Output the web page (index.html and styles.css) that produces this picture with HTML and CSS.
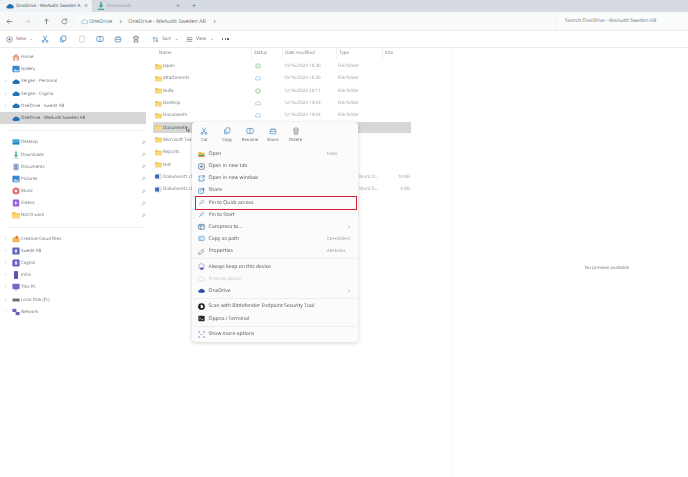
FILE: index.html
```html
<!DOCTYPE html>
<html lang="en">
<head>
<meta charset="utf-8">
<title>OneDrive - WeAudit Sweden AB</title>
<link rel="stylesheet" href="styles.css">
</head>
<body>
<svg class="defs" aria-hidden="true">
  <symbol id="cloud" viewBox="0 0 16 12"><path fill="currentColor" d="M4 11a3 3 0 0 1-.4-6A4.600 4.600 0 0 1 12 4.200 3.400 3.400 0 0 1 12.400 11z"/></symbol>
  <symbol id="cloud-o" viewBox="0 0 16 12"><path fill="none" stroke="currentColor" stroke-width="1.400" d="M4 11a3 3 0 0 1-.4-6A4.600 4.600 0 0 1 12 4.200 3.400 3.400 0 0 1 12.400 11z"/></symbol>
  <symbol id="folder" viewBox="0 0 16 13"><path fill="#f7c34f" d="M0 2a1.500 1.500 0 0 1 1.500-1.500h4L7.500 2.500H14.500A1.500 1.500 0 0 1 16 4v7.500a1.500 1.500 0 0 1-1.500 1.500h-13A1.500 1.500 0 0 1 0 11.500z"/><path fill="#fbd775" d="M0 5h16v6.500a1.500 1.500 0 0 1-1.500 1.500h-13A1.500 1.500 0 0 1 0 11.500z"/></symbol>
  <symbol id="doc" viewBox="0 0 14 14"><rect x="3" y="1" width="10" height="12" rx="1" fill="#d6e2f2"/><rect x="0" y="3" width="8" height="8" rx="1" fill="#3d6fb5"/></symbol>
  <symbol id="pin" viewBox="0 0 16 16"><path fill="none" stroke="currentColor" stroke-width="1.300" stroke-linejoin="round" d="M9.500 2 14 6.500l-3.500 1.500L8 11 5 8l3-2.500zM6.500 9.500 2 14"/></symbol>
  <symbol id="chev" viewBox="0 0 8 8"><path fill="none" stroke="currentColor" stroke-width="1" d="M3 1.500 5.500 4 3 6.500"/></symbol>
  <symbol id="status-ok" viewBox="0 0 12 12"><circle cx="6" cy="6" r="4.500" fill="none" stroke="#7cc08a" stroke-width="1.500"/><path d="M4 6l1.500 1.500L8 5" fill="none" stroke="#7cc08a"/></symbol>
</svg>

<div class="window">
  <header class="tabs">
    <div class="tab tab-active">
      <svg class="i8 c-cloud"><use href="#cloud"/></svg>
      <span class="tab-title">OneDrive - WeAudit Sweden A</span>
      <span class="tab-x">×</span>
    </div>
    <div class="tab tab-second">
      <svg class="i8" viewBox="0 0 10 10"><path fill="#3fa98a" d="M4 0h2v4h2L5 7.500 2 4h2zM1 8.500h8V10H1z"/></svg>
      <span class="tab-title tab-dim">Downloads</span>
      <span class="tab-x">×</span>
    </div>
    <span class="tab-plus">+</span>
  </header>

  <div class="address">
    <div class="nav-btns">
      <svg class="i7 c-dark" viewBox="0 0 10 10"><path fill="none" stroke="currentColor" d="M9 5H1.500M4.500 2 1.500 5l3 3"/></svg>
      <svg class="i7 c-faint" viewBox="0 0 10 10"><path fill="none" stroke="currentColor" d="M1 5h7.500M5.500 2l3 3-3 3"/></svg>
      <svg class="i7 c-dark" viewBox="0 0 10 10"><path fill="none" stroke="currentColor" d="M5 9V1.500M2 4.500l3-3 3 3"/></svg>
      <svg class="i7 c-dark" viewBox="0 0 10 10"><path fill="none" stroke="currentColor" d="M8.500 5a3.500 3.500 0 1 1-1-2.500M8 .8v2.200H5.800"/></svg>
    </div>
    <div class="crumbs">
      <svg class="i7 c-cloud-light"><use href="#cloud-o"/></svg>
      <span class="crumb crumb-a">OneDrive</span>
      <svg class="i5 c-dark"><use href="#chev"/></svg>
      <span class="crumb crumb-b">OneDrive - WeAudit Sweden AB</span>
      <svg class="i5 c-dark"><use href="#chev"/></svg>
    </div>
    <div class="search">Search OneDrive - WeAudit Sweden AB</div>
  </div>

  <div class="commands">
    <span class="cmd cmd-new">
      <svg class="i7 c-dark" viewBox="0 0 10 10"><circle cx="5" cy="5" r="4" fill="none" stroke="currentColor" stroke-width=".8"/><path stroke="#2a6fb0" stroke-width=".9" d="M5 3v4M3 5h4"/></svg>
      New <small>⌄</small>
    </span>
    <span class="cmd-icons">
      <svg class="i8" viewBox="0 0 10 10"><path fill="none" stroke="#4a8bc4" d="M2.500 1 7 7.500M7.500 1 3 7.500"/><circle cx="2.500" cy="8" r="1.200" fill="none" stroke="#4a8bc4"/><circle cx="7.500" cy="8" r="1.200" fill="none" stroke="#4a8bc4"/></svg>
      <svg class="i8" viewBox="0 0 10 10"><rect x="3.500" y="1" width="5" height="6" rx="1" fill="none" stroke="#4a8bc4"/><path fill="none" stroke="#4a8bc4" d="M2 3v5.500h4.500"/></svg>
      <svg class="i8" viewBox="0 0 10 10"><rect x="2" y="1.500" width="6" height="7.500" rx=".8" fill="none" stroke="#c9ced4"/></svg>
      <svg class="i8" viewBox="0 0 10 10"><rect x="1" y="2" width="8" height="6" rx="1" fill="none" stroke="#5f8fbd"/><path stroke="#5f8fbd" d="M5 1v8"/></svg>
      <svg class="i8" viewBox="0 0 10 10"><rect x="1.500" y="3" width="7" height="5.500" rx=".8" fill="none" stroke="#5f8fbd"/><path stroke="#5f8fbd" d="M3.500 3V1.500M6.500 3V1.500M1.500 5.500h7"/></svg>
      <svg class="i8" viewBox="0 0 10 10"><path fill="none" stroke="#6f7780" d="M1.500 2.500h7M2.500 2.500l.5 6.500h4l.5-6.500M4 1h2M4 4.500l2 2.500M6 4.500 4 7"/></svg>
    </span>
    <span class="cmd cmd-sort">
      <svg class="i7" viewBox="0 0 10 10"><path fill="none" stroke="#4a8bc4" d="M3 8.500v-7M1 3.500l2-2 2 2"/><path fill="none" stroke="#6f7780" d="M7 1.500v7M5.500 6.500l1.500 2 1.500-2"/></svg>
      Sort <small>⌄</small>
    </span>
    <span class="cmd cmd-view">
      <svg class="i7" viewBox="0 0 10 10"><path stroke="#6f7780" d="M1 2.500h8M1 5h8M1 7.500h8"/></svg>
      View <small>⌄</small>
    </span>
    <span class="cmd-more"><i></i><i></i><i></i></span>
  </div>

  <main class="body">
    <nav class="sidebar">
      <div class="nav-row"><span class="exp"></span><svg class="i8" viewBox="0 0 10 10"><path fill="#e6a58a" d="M5 .8 9.500 4.800 8.700 5.500V9.500H1.300V5.500L.5 4.800z"/><rect x="4" y="6" width="2" height="3.500" fill="#fff"/></svg><span class="soft">Home</span></div>
      <div class="nav-row"><span class="exp"></span><svg class="i8" viewBox="0 0 10 10"><rect x=".5" y="1" width="9" height="8" rx="1" fill="#3f86cf"/><path fill="#bfe0f7" d="M1.500 8 4 5l2 2 1.500-1.500L9 8z"/></svg><span class="soft">Gallery</span></div>
      <div class="nav-row"><span class="exp">›</span><svg class="i7 c-cloud"><use href="#cloud"/></svg><span class="soft">Vergen - Personal</span></div>
      <div class="nav-row"><span class="exp">›</span><svg class="i7 c-cloud"><use href="#cloud"/></svg><span class="soft">Vergen - Cognia</span></div>
      <div class="nav-row"><span class="exp">›</span><svg class="i7 c-cloud"><use href="#cloud"/></svg><span class="soft">OneDrive - Swedit AB</span></div>
      <div class="nav-row nav-sel"><span class="exp">›</span><svg class="i7 c-cloud"><use href="#cloud"/></svg><span class="soft">OneDrive - WeAudit Sweden AB</span></div>

      <div class="nav-sep nav-sep-a"></div>

      <div class="nav-row"><span class="exp"></span><svg class="i8" viewBox="0 0 10 10"><rect x=".5" y="1.500" width="9" height="7" rx="1" fill="#43a7d6"/><rect x="1.500" y="6.500" width="7" height="1" fill="#1d6f9c"/></svg><span class="soft grow">Desktop</span><svg class="i5 c-mid"><use href="#pin"/></svg></div>
      <div class="nav-row"><span class="exp"></span><svg class="i8" viewBox="0 0 10 10"><path fill="#52b89a" d="M4 .5h2v4.500h2L5 8 2 5h2z"/><path fill="#a9c9d8" d="M1.500 8.500h7v1h-7z"/></svg><span class="soft grow">Downloads</span><svg class="i5 c-mid"><use href="#pin"/></svg></div>
      <div class="nav-row"><span class="exp"></span><svg class="i8" viewBox="0 0 10 10"><rect x="1.500" y=".5" width="7" height="9" rx=".8" fill="#b4c3dc"/><path stroke="#4f73ad" d="M3 3h4M3 5h4M3 7h4"/></svg><span class="soft grow">Documents</span><svg class="i5 c-mid"><use href="#pin"/></svg></div>
      <div class="nav-row"><span class="exp"></span><svg class="i8" viewBox="0 0 10 10"><rect x=".5" y="1" width="9" height="8" rx="1" fill="#3f86cf"/><path fill="#bfe0f7" d="M1.500 8 4 5l2 2 1.500-1.500L9 8z"/></svg><span class="soft grow">Pictures</span><svg class="i5 c-mid"><use href="#pin"/></svg></div>
      <div class="nav-row"><span class="exp"></span><svg class="i8" viewBox="0 0 10 10"><circle cx="5" cy="5" r="4.500" fill="#e2737c"/><circle cx="5" cy="5" r="1.500" fill="#fff"/></svg><span class="soft grow">Music</span><svg class="i5 c-mid"><use href="#pin"/></svg></div>
      <div class="nav-row"><span class="exp"></span><svg class="i8" viewBox="0 0 10 10"><rect x="1" y=".5" width="8" height="9" rx="1" fill="#9a62d8"/><path fill="#fff" d="M3.800 3v4L7 5z"/></svg><span class="soft grow">Videos</span><svg class="i5 c-mid"><use href="#pin"/></svg></div>
      <div class="nav-row"><span class="exp"></span><svg class="i8"><use href="#folder"/></svg><span class="soft grow">NaCl3 work</span><svg class="i5 c-mid"><use href="#pin"/></svg></div>

      <div class="nav-sep nav-sep-b"></div>

      <div class="nav-row"><span class="exp">›</span><svg class="i8" viewBox="0 0 10 10"><path fill="#f4b65a" d="M.5 3h4l1 1h4v5h-9z"/><circle cx="6" cy="3" r="2" fill="#ea7b3d"/></svg><span class="soft">Creative Cloud Files</span></div>
      <div class="nav-row"><span class="exp">›</span><svg class="i8" viewBox="0 0 10 10"><rect x=".5" y=".5" width="9" height="9" rx="1.500" fill="#5f5fc4"/><rect x="3.500" y="3" width="3" height="4" fill="#dcdcf6"/></svg><span class="soft">Swedit AB</span></div>
      <div class="nav-row"><span class="exp">›</span><svg class="i8" viewBox="0 0 10 10"><rect x=".5" y=".5" width="9" height="9" rx="1.500" fill="#5f5fc4"/><rect x="3.500" y="3" width="3" height="4" fill="#dcdcf6"/></svg><span class="soft">Cognia</span></div>
      <div class="nav-row"><span class="exp">›</span><svg class="i8" viewBox="0 0 10 10"><rect x="2.500" y="0" width="5" height="10" rx="1.200" fill="#5a55b5"/></svg><span class="soft">Infra</span></div>
      <div class="nav-row"><span class="exp">›</span><svg class="i8" viewBox="0 0 10 10"><rect x=".5" y="1" width="9" height="6.500" rx=".8" fill="#7469c4"/><rect x="3" y="8" width="4" height="1" fill="#7469c4"/></svg><span class="soft">This PC</span></div>
      <div class="nav-row"><span class="exp">›</span><svg class="i8" viewBox="0 0 10 10"><rect x=".5" y="3" width="9" height="4" rx=".8" fill="#6c7278"/></svg><span class="soft">Local Disk (D:)</span></div>
      <div class="nav-row"><span class="exp">›</span><svg class="i8" viewBox="0 0 10 10"><rect x=".5" y="1" width="5" height="4" fill="#6a63bd"/><rect x="4.500" y="5" width="5" height="4" fill="#6a63bd"/></svg><span class="soft">Network</span></div>
    </nav>

    <section class="files">
      <div class="file-head">
        <span class="col-name">Name</span><span class="col">Status</span><span class="col">Date modified</span><span class="col">Type</span><span class="col">Size</span>
      </div>
      <div class="file-row"><span class="name"><svg class="i7"><use href="#folder"/></svg><i class="soft">Japan</i></span><span><svg class="i6"><use href="#status-ok"/></svg></span><span class="soft pale">10/16/2024 10:30</span><span class="soft pale">File folder</span><span></span></div>
      <div class="file-row"><span class="name"><svg class="i7"><use href="#folder"/></svg><i class="soft">attachments</i></span><span><svg class="i6 c-cloud-light"><use href="#cloud-o"/></svg></span><span class="soft pale">10/16/2024 10:30</span><span class="soft pale">File folder</span><span></span></div>
      <div class="file-row"><span class="name"><svg class="i7"><use href="#folder"/></svg><i class="soft">Bulla</i></span><span><svg class="i6"><use href="#status-ok"/></svg></span><span class="soft pale">12/16/2024 20:11</span><span class="soft pale">File folder</span><span></span></div>
      <div class="file-row"><span class="name"><svg class="i7"><use href="#folder"/></svg><i class="soft">Desktop</i></span><span><svg class="i6 c-cloud-light"><use href="#cloud-o"/></svg></span><span class="soft pale">12/16/2024 19:03</span><span class="soft pale">File folder</span><span></span></div>
      <div class="file-row"><span class="name"><svg class="i7"><use href="#folder"/></svg><i class="soft">Documents</i></span><span><svg class="i6 c-cloud-light"><use href="#cloud-o"/></svg></span><span class="soft pale">12/16/2024 19:03</span><span class="soft pale">File folder</span><span></span></div>
      <div class="file-row file-sel"><span class="name"><svg class="i7"><use href="#folder"/></svg><i class="soft dark">Documents</i></span><span></span><span></span><span></span><span></span></div>
      <div class="file-row"><span class="name"><svg class="i7"><use href="#folder"/></svg><i class="soft">Microsoft Tea</i></span><span></span><span></span><span></span><span></span></div>
      <div class="file-row"><span class="name"><svg class="i7"><use href="#folder"/></svg><i class="soft">Reports</i></span><span></span><span></span><span></span><span></span></div>
      <div class="file-row"><span class="name"><svg class="i7"><use href="#folder"/></svg><i class="soft">test</i></span><span></span><span></span><span></span><span></span></div>
      <div class="file-row"><span class="name"><svg class="i7"><use href="#doc"/></svg><i class="soft">Dokument1.do</i></span><span></span><span></span><span class="soft pale">Microsoft Word D...</span><span class="size soft pale">10 KB</span></div>
      <div class="file-row"><span class="name"><svg class="i7"><use href="#doc"/></svg><i class="soft">Dokument2.do</i></span><span></span><span></span><span class="soft pale">Microsoft Word D...</span><span class="size soft pale">0 KB</span></div>
    </section>

    <aside class="preview">No preview available</aside>
  </main>

  <svg class="cursor" viewBox="0 0 10 12" aria-hidden="true"><path fill="#fff" stroke="#222" stroke-width="1" d="M1 1v8l2-1.800L4.500 10.500 6 10 4.500 7H7z"/></svg>

  <div class="menu">
    <div class="menu-top">
      <div class="top-btn"><svg class="i8" viewBox="0 0 10 10"><path fill="none" stroke="#3a7cb8" stroke-width=".8" d="M2.500 1 7 7.500M7.500 1 3 7.500"/><circle cx="2.500" cy="8" r="1.200" fill="none" stroke="#3a7cb8" stroke-width=".8"/><circle cx="7.500" cy="8" r="1.200" fill="none" stroke="#3a7cb8" stroke-width=".8"/></svg><span>Cut</span></div>
      <div class="top-btn"><svg class="i8" viewBox="0 0 10 10"><rect x="3.500" y="1" width="5" height="6" rx="1" fill="none" stroke="#3a7cb8" stroke-width=".8"/><path fill="none" stroke="#3a7cb8" stroke-width=".8" d="M2 3v5.500h4.500"/></svg><span>Copy</span></div>
      <div class="top-btn"><svg class="i8" viewBox="0 0 10 10"><rect x="1" y="2" width="8" height="6" rx="1" fill="none" stroke="#3a7cb8" stroke-width=".8"/><path stroke="#3a7cb8" stroke-width=".8" d="M5 1v8"/></svg><span>Rename</span></div>
      <div class="top-btn"><svg class="i8" viewBox="0 0 10 10"><rect x="1.500" y="3" width="7" height="5.500" rx=".8" fill="none" stroke="#3a7cb8" stroke-width=".8"/><path stroke="#3a7cb8" stroke-width=".8" d="M3.500 3V1.500M6.500 3V1.500M1.500 5.500h7"/></svg><span>Share</span></div>
      <div class="top-btn"><svg class="i8" viewBox="0 0 10 10"><path fill="none" stroke="#5d656e" stroke-width=".8" d="M1.500 2.500h7M2.500 2.500l.5 6.500h4l.5-6.500M4 1h2M4 4.500l2 2.500M6 4.500 4 7"/></svg><span>Delete</span></div>
    </div>
    <div class="menu-list">
      <div class="mi"><svg class="i7" viewBox="0 0 10 10"><path fill="#f0b93a" d="M.5 1.500h3.500l1 1h4.500v2h-9z"/><path fill="#3c9a5f" d="M.5 5h9v2h-9z"/><path fill="#e8872e" d="M.5 7h9v1.500h-9z"/></svg><span class="mt">Open</span><span class="ms">Enter</span></div>
      <div class="mi"><svg class="i7" viewBox="0 0 10 10"><rect x="1" y="1" width="8" height="8" rx="1.500" fill="none" stroke="#5d6a78"/><rect x="3.500" y="3.500" width="3" height="3" fill="#3a7cb8"/></svg><span class="mt">Open in new tab</span></div>
      <div class="mi"><svg class="i7" viewBox="0 0 10 10"><path fill="none" stroke="#3a7cb8" d="M5 1.500H1.500v7h7V5M6 1h3v3M9 1 5 5"/></svg><span class="mt">Open in new window</span></div>
      <div class="mi"><svg class="i7" viewBox="0 0 10 10"><rect x="1" y="2.500" width="7" height="6.500" rx="1" fill="none" stroke="#3a7cb8"/><path fill="none" stroke="#3a7cb8" d="M3.500 6.500C4 4 6 3 9 3M7 1l2 2-2 2"/></svg><span class="mt">Share</span></div>
      <div class="mi mi-red"><svg class="i7 c-pin"><use href="#pin"/></svg><span class="mt">Pin to Quick access</span></div>
      <div class="mi"><svg class="i7 c-pin"><use href="#pin"/></svg><span class="mt">Pin to Start</span></div>
      <div class="mi"><svg class="i7" viewBox="0 0 10 10"><rect x="1" y="2" width="8" height="7" rx="1" fill="none" stroke="#3a6f9c"/><path stroke="#3a6f9c" d="M1 4h8M4 4v5"/></svg><span class="mt">Compress to...</span><svg class="i4 c-mid"><use href="#chev"/></svg></div>
      <div class="mi"><svg class="i7" viewBox="0 0 10 10"><rect x="1" y="2" width="8" height="6" rx="1" fill="#dbe9f6" stroke="#4a8bc4" stroke-width=".8"/><path stroke="#4a8bc4" d="M2.800 4v2"/></svg><span class="mt">Copy as path</span><span class="ms">Ctrl+Shift+C</span></div>
      <div class="mi"><svg class="i7" viewBox="0 0 10 10"><path fill="none" stroke="#7a828a" d="M9 1.500 7 3.500M6.500 1.500A2.500 2.500 0 0 0 7.800 5.500L3 9 1 9V7l3.500-3.800"/></svg><span class="mt">Properties</span><span class="ms">Alt+Enter</span></div>
      <div class="m-sep"></div>
      <div class="mi"><svg class="i7" viewBox="0 0 10 10"><circle cx="5" cy="5" r="4" fill="none" stroke="#8c90c8"/><path fill="#4b53b5" d="M3 9c0-2 1-3 2-3s3 1 3 2.500L6 9.500z"/></svg><span class="mt">Always keep on this device</span></div>
      <div class="mi mi-off"><svg class="i7 c-grey"><use href="#cloud-o"/></svg><span class="mt">Free up space</span></div>
      <div class="mi"><svg class="i7 c-od"><use href="#cloud"/></svg><span class="mt">OneDrive</span><svg class="i4 c-mid"><use href="#chev"/></svg></div>
      <div class="m-sep"></div>
      <div class="mi"><svg class="i7" viewBox="0 0 10 10"><circle cx="5" cy="5" r="4.800" fill="#1b1b1b"/><path fill="#fff" d="M3.800 2.500h2a1 1 0 0 1 .6 1.800 1.200 1.200 0 0 1-.5 2.700h-2.100z"/></svg><span class="mt">Scan with Bitdefender Endpoint Security Tool</span></div>
      <div class="mi"><svg class="i7" viewBox="0 0 10 10"><rect x=".5" y="1" width="9" height="8" rx="1" fill="#2a2a2a"/><path fill="none" stroke="#fff" stroke-width=".8" d="M2 3.500 3.500 5 2 6.500M4.500 6.500h3"/></svg><span class="mt">Öppna i Terminal</span></div>
      <div class="m-sep"></div>
      <div class="mi"><svg class="i7" viewBox="0 0 10 10"><path fill="none" stroke="#5f8fbd" d="M1 3V1h2M7 1h2v2M1 7v2h2M7 9h2V7"/><path stroke="#8d959c" d="M3.500 5h3"/></svg><span class="mt">Show more options</span></div>
    </div>
  </div>
</div>
</body>
</html>
```

FILE: styles.css
```css
* { box-sizing: border-box; }
html, body { margin: 0; height: 100%; }
body {
  font-family: "Open Sans", "Noto Sans", "Liberation Sans", sans-serif;
  font-size: 4.500px;
  color: #6d7276;
  background: #fff;
  overflow: hidden;
  text-rendering: geometricPrecision;
}
.defs { position: absolute; width: 0; height: 0; }
svg { display: block; flex: none; overflow: visible; }
.i4 { width: 4px; height: 4px; }
.i5 { width: 5px; height: 5px; }
.i6 { width: 6px; height: 6px; }
.i7 { width: 7px; height: 7px; }
.i8 { width: 8px; height: 8px; }
.c-cloud { color: #1f72b5; }
.c-cloud-light { color: #6aa4d6; }
.c-dark { color: #5c6166; }
.c-mid { color: #85898d; }
.c-faint { color: #c4c8cc; }
.c-pin { color: #5d93cc; }
.c-grey { color: #d3d5d8; }
.c-od { color: #2c4f9e; }

.window { position: relative; width: 688px; height: 477px; display: flex; flex-direction: column; filter: blur(.22px); }

/* tab strip */
.tabs { height: 12px; background: #d6dbe1; display: flex; align-items: stretch; flex: none; }
.tab { padding-left: 6px; display: flex; align-items: center; gap: 2px; color: #7f8589; font-size: 4.600px; }
.tab-active { background: #f0f3f5; color: #44494e; width: 92px; border-radius: 3px 3px 0 0; }
.tab-second { width: 97px; padding-left: 5px; }
.tab-title { flex: 1; white-space: nowrap; }
.tab-dim { color: #959a9e; }
.tab-x { width: 8px; font-size: 7px; color: #777; }
.tab-second .tab-x { margin-right: 5px; }
.tab-plus { font-size: 7px; color: #666; align-self: center; margin-left: 3px; }

/* address bar */
.address { height: 19px; background: #f6f8f9; display: flex; align-items: center; flex: none; border-bottom: 1px solid #eceef0; }
.nav-btns { width: 76px; padding: 0 0 0 6px; display: flex; gap: 11.300px; }
.crumbs { width: 479px; height: 14px; background: #f9fbfb; display: flex; align-items: center; padding-left: 5px; font-size: 5.300px; color: #666b70; }
.crumb-a { margin: 0 6px 0 1px; }
.crumb-b { margin: 0 6px 0 5px; }
.search { flex: 1; margin-left: 3px; height: 14px; line-height: 14px; padding-left: 7px; background: #fbfcfc; color: #6f7478; font-size: 5.050px; white-space: nowrap; }

/* command bar */
.commands { height: 17px; background: #fff; border-bottom: 1px solid #e9eaeb; display: flex; align-items: center; flex: none; font-size: 4.700px; }
.cmd { display: flex; align-items: center; gap: 3px; color: #63686c; }
.cmd small { font-size: 4px; margin-left: 1px; }
.cmd-new { margin-left: 6px; width: 35px; }
.cmd-icons { display: flex; gap: 10.300px; width: 106px; }
.cmd-sort { margin-left: 5px; width: 34px; }
.cmd-view { width: 36px; }
.cmd-more { display: flex; gap: 1.500px; }
.cmd-more i { width: 1.200px; height: 1.200px; border-radius: 50%; background: #555; }

/* main */
.body { flex: 1; display: flex; min-height: 0; }
.sidebar { width: 147px; flex: none; padding-top: 3px; font-size: 4.400px; }
.nav-row { height: 12.200px; display: flex; align-items: center; padding-right: 1px; }
.nav-row .i7 { width: 8px; }
.exp { width: 12px; padding-left: 5px; font-size: 5px; color: #9a9ea2; flex: none; }
.nav-row .soft { margin-left: 1px; }
.soft { font-style: normal; filter: blur(.35px); white-space: nowrap; }
.pale { color: #95999d; }
.dark { color: #44494e; }
.grow { flex: 1; }
.nav-sel { background: #d7d7d7; color: #4b5055; width: 146px; }
.nav-sep { height: 1px; background: #eff0f1; margin-left: 6px; width: 138px; }
.nav-sep-a { margin-top: 5.600px; margin-bottom: 5.500px; }
.nav-sep-b { margin-top: 5px; margin-bottom: 5px; }

.files { width: 305px; flex: none; padding-left: 6px; border-right: 1px solid #f6f7f8; }
.file-head { height: 12px; margin-top: -1px; margin-bottom: 1px; display: grid; grid-template-columns: 100px 31px 54px 46px 29px; align-items: center; color: #74797d; width: 260px; }
.col-name { padding-left: 6px; }
.col { border-left: 1px solid #f0f1f2; padding-left: 2px; height: 12px; line-height: 12px; margin-left: -2px; }
.file-row { height: 12.300px; display: grid; grid-template-columns: 100px 31px 54px 46px 27px; align-items: center; white-space: nowrap; width: 258px; }
.file-row > span:nth-child(2) { padding-left: 2px; }
.file-row > span:first-child { padding-left: 2px; }
.name { display: flex; align-items: center; gap: 1px; }
.file-sel { background: #d7d7d7; height: 11px; margin: .6px 0 .7px; }
.size { text-align: right; padding-right: 1px; }

.preview { flex: 1; display: flex; align-items: center; justify-content: center; color: #72777b; padding-top: 10px; padding-left: 74px; font-size: 4.600px; }

.cursor { position: absolute; left: 186px; top: 126px; width: 5px; height: 7px; z-index: 3; }

/* context menu */
.menu {
  position: absolute; left: 192px; top: 122px; width: 166px; height: 220px; z-index: 2;
  background: #fbfbfb; border-radius: 4px;
  box-shadow: 0 1px 4px rgba(0,0,0,.18);
  color: #4c5055; font-size: 5.050px;
  display: flex; flex-direction: column;
}
.menu-top { height: 26px; flex: none; display: flex; padding: 5px 0 0 1px; }
.top-btn { width: 22.800px; display: flex; flex-direction: column; align-items: center; gap: 1.500px; font-size: 4.300px; color: #5a5f64; }
.menu-list { padding: 0 1px; }
.mi { height: 12.150px; display: flex; align-items: center; padding: 0 8px 0 5px; gap: 3.500px; white-space: nowrap; }
.mt { flex: 1; }
.ms { font-size: 4.300px; color: #8a8e92; width: 25px; margin-right: -3px; }
.mi svg.i4 { margin-right: -2px; }
.mi-red { outline: 1px solid #d6203a; margin: 0 1px 0 3px; padding-left: 2px; height: 12px; position: relative; }
.mi-off { color: #c3c5c8; }
.m-sep { height: 1px; background: #eeeeee; margin: 1.200px 0; }
```
